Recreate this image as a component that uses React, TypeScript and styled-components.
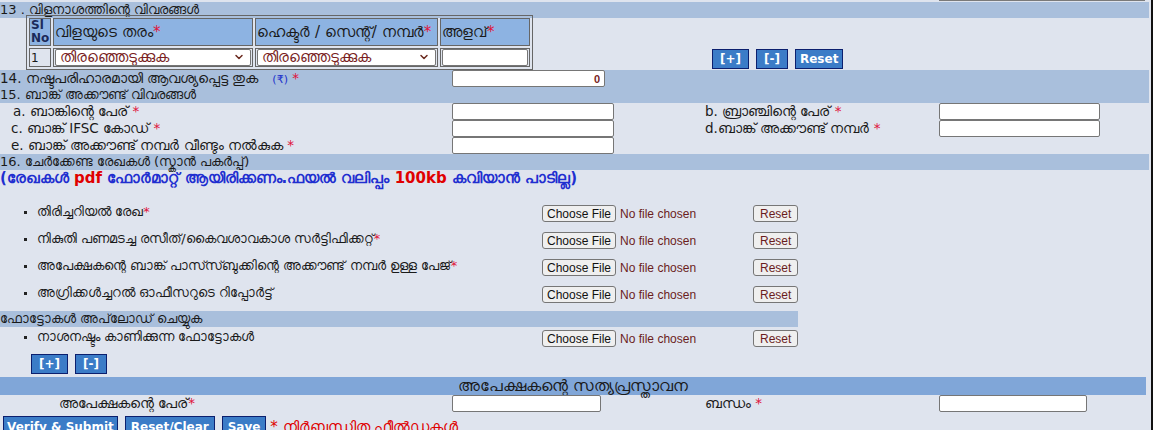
import styled, { createGlobalStyle } from "styled-components";
import { ChevronDown } from "lucide-react";

const GlobalStyle = createGlobalStyle`
  body {
    margin: 0;
    background: #ffffff;
    font-family: "DejaVu Sans", "Noto Sans", sans-serif;
  }
  * { box-sizing: border-box; }
`;

const Page = styled.div`
  width: 1153px;
  height: 430px;
  overflow: hidden;
  background: #dfe4ee;
  border-right: 2px solid #111;
  font-size: 13px;
  color: #1a1a1a;
`;

const TopStub = styled.div`
  height: 2px;
  padding-left: 939px;
`;

const StubLine = styled.div`
  width: 206px;
  height: 1px;
  background: #7a7a7a;
`;

const Band = styled.div<{ $width?: number; $dark?: boolean; $center?: boolean; $tall?: boolean }>`
  width: ${(p) => (p.$width ? `${p.$width}px` : "1149px")};
  height: ${(p) => (p.$tall ? "18px" : "16px")};
  line-height: ${(p) => (p.$tall ? "18px" : "16px")};
  background: ${(p) => (p.$dark ? "#80a6d8" : "#a9bfdc")};
  text-align: ${(p) => (p.$center ? "center" : "left")};
  font-size: ${(p) => (p.$tall ? "16px" : "13px")};
  white-space: nowrap;
`;

const CropSection = styled.div`
  display: flex;
  align-items: flex-end;
  padding-left: 26px;
  height: 52px;
`;

const CropTable = styled.table`
  border: 1px solid #666;
  border-spacing: 2px;
  width: 507px;
`;

const HeadCell = styled.th<{ $w: number; $bold?: boolean }>`
  width: ${(p) => p.$w}px;
  height: 28px;
  padding: 0 1px;
  border: 1px solid #666;
  background: #8db3e2;
  text-align: left;
  font-weight: ${(p) => (p.$bold ? 700 : 400)};
  font-size: ${(p) => (p.$bold ? "12px" : "15px")};
  line-height: 13px;
  color: ${(p) => (p.$bold ? "#1b2a5a" : "#1a1a1a")};
  white-space: nowrap;
`;

const DataCell = styled.td`
  height: 18px;
  padding: 0 1px;
  border: 1px solid #666;
  font-size: 12px;
  vertical-align: middle;
`;

const SelectWrap = styled.div`
  position: relative;
  height: 17px;
`;

const Select = styled.select`
  appearance: none;
  width: 100%;
  height: 17px;
  padding: 0 18px 0 4px;
  border: 1px solid #767676;
  border-radius: 2px;
  background: #fff;
  color: #7a1f1f;
  font-size: 14.5px;
  font-family: inherit;
  line-height: 15px;
`;

const Chevron = styled(ChevronDown)`
  position: absolute;
  right: 6px;
  top: 2px;
  color: #6b2a1f;
  pointer-events: none;
`;

const Req = styled.span`
  color: #e0143c;
`;

const Rupee = styled.span`
  color: #2233cc;
  margin-left: 14px;
  font-size: 11px;
`;

const ActionGroup = styled.div<{ $left?: number }>`
  display: flex;
  gap: 7px;
  margin-left: ${(p) => p.$left ?? 0}px;
  margin-bottom: 1px;
`;

const BlueButton = styled.button<{ $big?: boolean; $pad?: number }>`
  height: ${(p) => (p.$big ? "22px" : "20px")};
  padding: 0 ${(p) => p.$pad ?? 4}px;
  border: 1px solid #0b1f6e;
  background: #3b7cc7;
  color: #fff;
  font-family: "DejaVu Sans", sans-serif;
  font-weight: 700;
  font-size: 12px;
  cursor: pointer;
`;

const FieldRow = styled.div<{ $band?: boolean; $width?: number }>`
  display: grid;
  grid-template-columns: 452px 253px 234px 1fr;
  align-items: center;
  justify-items: start;
  width: ${(p) => (p.$width ? `${p.$width}px` : "1149px")};
  height: 17px;
  background: ${(p) => (p.$band ? "#a9bfdc" : "transparent")};
  white-space: nowrap;
`;

const Label = styled.div<{ $indent?: number }>`
  padding-left: ${(p) => p.$indent ?? 0}px;
  font-size: 13.5px;
`;

const TextInput = styled.input<{ $w: number }>`
  width: ${(p) => p.$w}px;
  height: 17px;
  padding: 0 4px;
  border: 1px solid #767676;
  border-radius: 2px;
  background: #fff;
  font-size: 11px;
  font-weight: 700;
  color: #7a1f1f;
  text-align: right;
`;

const Note = styled.div`
  height: 16px;
  line-height: 16px;
  font-size: 15px;
  font-weight: 700;
  color: #1f2fd0;
  white-space: nowrap;
`;

const Red = styled.span`
  color: #e00000;
`;

const DocList = styled.ul<{ $top?: number }>`
  list-style: none;
  margin: 0;
  padding: ${(p) => p.$top ?? 19}px 0 0;
`;

const DocItem = styled.li<{ $h?: number }>`
  display: grid;
  grid-template-columns: 542px 211px auto;
  align-items: start;
  justify-items: start;
  height: ${(p) => p.$h ?? 27}px;
  white-space: nowrap;
`;

const DocLabel = styled.div`
  display: flex;
  align-items: center;
  gap: 10px;
  padding-left: 24px;
  height: 14px;
  font-size: 13px;
`;

const Dot = styled.span`
  width: 3px;
  height: 3px;
  background: #222;
`;

const FileInput = styled.input`
  width: 211px;
  height: 17px;
  font: 12px "Liberation Sans", Arial, sans-serif;
  color: #6b1d1d;

  &::file-selector-button {
    font: inherit;
    color: #111;
    height: 17px;
    padding: 0 4px;
    margin-right: 4px;
    border: 1px solid #767676;
    border-radius: 3px;
    background: #efefef;
  }
`;

const PlainButton = styled.button`
  height: 17px;
  padding: 0 6px;
  border: 1px solid #767676;
  border-radius: 3px;
  background: #efefef;
  font: 12px "Liberation Sans", Arial, sans-serif;
  color: #6b1d1d;
`;

const PhotoTools = styled.div`
  padding: 4px 0 2px 31px;
`;

const Footer = styled.div`
  display: flex;
  align-items: center;
  gap: 7px;
  padding: 4px 0 0 3px;
  white-space: nowrap;
`;

const MandatoryNote = styled.span`
  color: #e00000;
  font-size: 15px;
  margin-left: -3px;
`;

const documents = [
  { label: "തിരിച്ചറിയൽ രേഖ", required: true },
  { label: "നികുതി പണമടച്ച രസീത്/കൈവശാവകാശ സർട്ടിഫിക്കറ്റ്", required: true },
  { label: "അപേക്ഷകന്റെ ബാങ്ക് പാസ്സ്ബുക്കിന്റെ അക്കൗണ്ട് നമ്പർ ഉള്ള പേജ്", required: true },
  { label: "അഗ്രിക്കൾച്ചറൽ ഓഫീസറുടെ റിപ്പോർട്ട്", required: false },
];

function CropSelect() {
  return (
    <SelectWrap>
      <Select defaultValue="">
        <option value="">തിരഞ്ഞെടുക്കുക</option>
      </Select>
      <Chevron size={12} strokeWidth={3} />
    </SelectWrap>
  );
}

function UploadRow({ label, required, h }: { label: string; required?: boolean; h?: number }) {
  return (
    <DocItem $h={h}>
      <DocLabel>
        <Dot />
        <span>
          {label}
          {required ? <Req>*</Req> : null}
        </span>
      </DocLabel>
      <FileInput type="file" />
      <PlainButton>Reset</PlainButton>
    </DocItem>
  );
}

export default function App() {
  return (
    <>
      <GlobalStyle />
      <Page>
        <TopStub>
          <StubLine />
        </TopStub>
        <Band>13 . വിളനാശത്തിന്റെ വിവരങ്ങൾ</Band>

        <CropSection>
          <CropTable>
            <thead>
              <tr>
                <HeadCell $w={20} $bold>
                  Sl
                  <br />
                  No
                </HeadCell>
                <HeadCell $w={205}>
                  വിളയുടെ തരം<Req>*</Req>
                </HeadCell>
                <HeadCell $w={183}>
                  ഹെക്ടർ / സെന്റ്/ നമ്പർ<Req>*</Req>
                </HeadCell>
                <HeadCell $w={88}>
                  അളവ്<Req>*</Req>
                </HeadCell>
              </tr>
            </thead>
            <tbody>
              <tr>
                <DataCell>1</DataCell>
                <DataCell>
                  <CropSelect />
                </DataCell>
                <DataCell>
                  <CropSelect />
                </DataCell>
                <DataCell>
                  <TextInput $w={86} />
                </DataCell>
              </tr>
            </tbody>
          </CropTable>
          <ActionGroup $left={179}>
            <BlueButton $pad={7}>[+]</BlueButton>
            <BlueButton $pad={7}>[-]</BlueButton>
            <BlueButton>Reset</BlueButton>
          </ActionGroup>
        </CropSection>

        <FieldRow $band>
          <Label>
            14. നഷ്ടപരിഹാരമായി ആവശ്യപ്പെട്ട തുക<Rupee>(₹)</Rupee> <Req>*</Req>
          </Label>
          <TextInput $w={153} defaultValue="0" />
        </FieldRow>
        <Band>15. ബാങ്ക് അക്കൗണ്ട് വിവരങ്ങൾ</Band>
        <FieldRow>
          <Label $indent={13}>
            a. ബാങ്കിന്റെ പേര് <Req>*</Req>
          </Label>
          <TextInput $w={162} />
          <Label>
            b. ബ്രാഞ്ചിന്റെ പേര് <Req>*</Req>
          </Label>
          <TextInput $w={161} />
        </FieldRow>
        <FieldRow>
          <Label $indent={11}>
            c. ബാങ്ക് IFSC കോഡ് <Req>*</Req>
          </Label>
          <TextInput $w={162} />
          <Label>
            d.ബാങ്ക് അക്കൗണ്ട് നമ്പർ <Req>*</Req>
          </Label>
          <TextInput $w={161} />
        </FieldRow>
        <FieldRow>
          <Label $indent={11}>
            e. ബാങ്ക് അക്കൗണ്ട് നമ്പർ വീണ്ടും നൽകുക <Req>*</Req>
          </Label>
          <TextInput $w={162} />
        </FieldRow>
        <Band>16. ചേർക്കേണ്ട രേഖകൾ (സ്കാൻ പകർപ്പ്)</Band>
        <Note>
          (രേഖകൾ <Red>pdf</Red> ഫോർമാറ്റ് ആയിരിക്കണം.ഫയൽ വലിപ്പം <Red>100kb</Red> കവിയാൻ പാടില്ല)
        </Note>

        <DocList>
          {documents.map((d, i) => (
            <UploadRow key={d.label} label={d.label} required={d.required} h={i === documents.length - 1 ? 25 : 27} />
          ))}
        </DocList>

        <Band $width={798}>ഫോട്ടോകൾ അപ്‌ലോഡ് ചെയ്യുക</Band>
        <DocList $top={3}>
          <UploadRow label="നാശനഷ്ടം കാണിക്കുന്ന ഫോട്ടോകൾ" h={20} />
        </DocList>
        <PhotoTools>
          <ActionGroup>
            <BlueButton $pad={7}>[+]</BlueButton>
            <BlueButton $pad={7}>[-]</BlueButton>
          </ActionGroup>
        </PhotoTools>

        <Band $width={1146} $dark $center $tall>
          അപേക്ഷകന്റെ സത്യപ്രസ്താവന
        </Band>
        <FieldRow>
          <Label $indent={59}>
            അപേക്ഷകന്റെ പേര്<Req>*</Req>
          </Label>
          <TextInput $w={149} />
          <Label>
            ബന്ധം <Req>*</Req>
          </Label>
          <TextInput $w={148} />
        </FieldRow>
        <Footer>
          <BlueButton $big $pad={3}>Verify &amp; Submit</BlueButton>
          <BlueButton $big $pad={5}>Reset/Clear</BlueButton>
          <BlueButton $big $pad={5}>Save</BlueButton>
          <MandatoryNote>* നിർബന്ധിത ഫീൽഡുകൾ</MandatoryNote>
        </Footer>
      </Page>
    </>
  );
}
